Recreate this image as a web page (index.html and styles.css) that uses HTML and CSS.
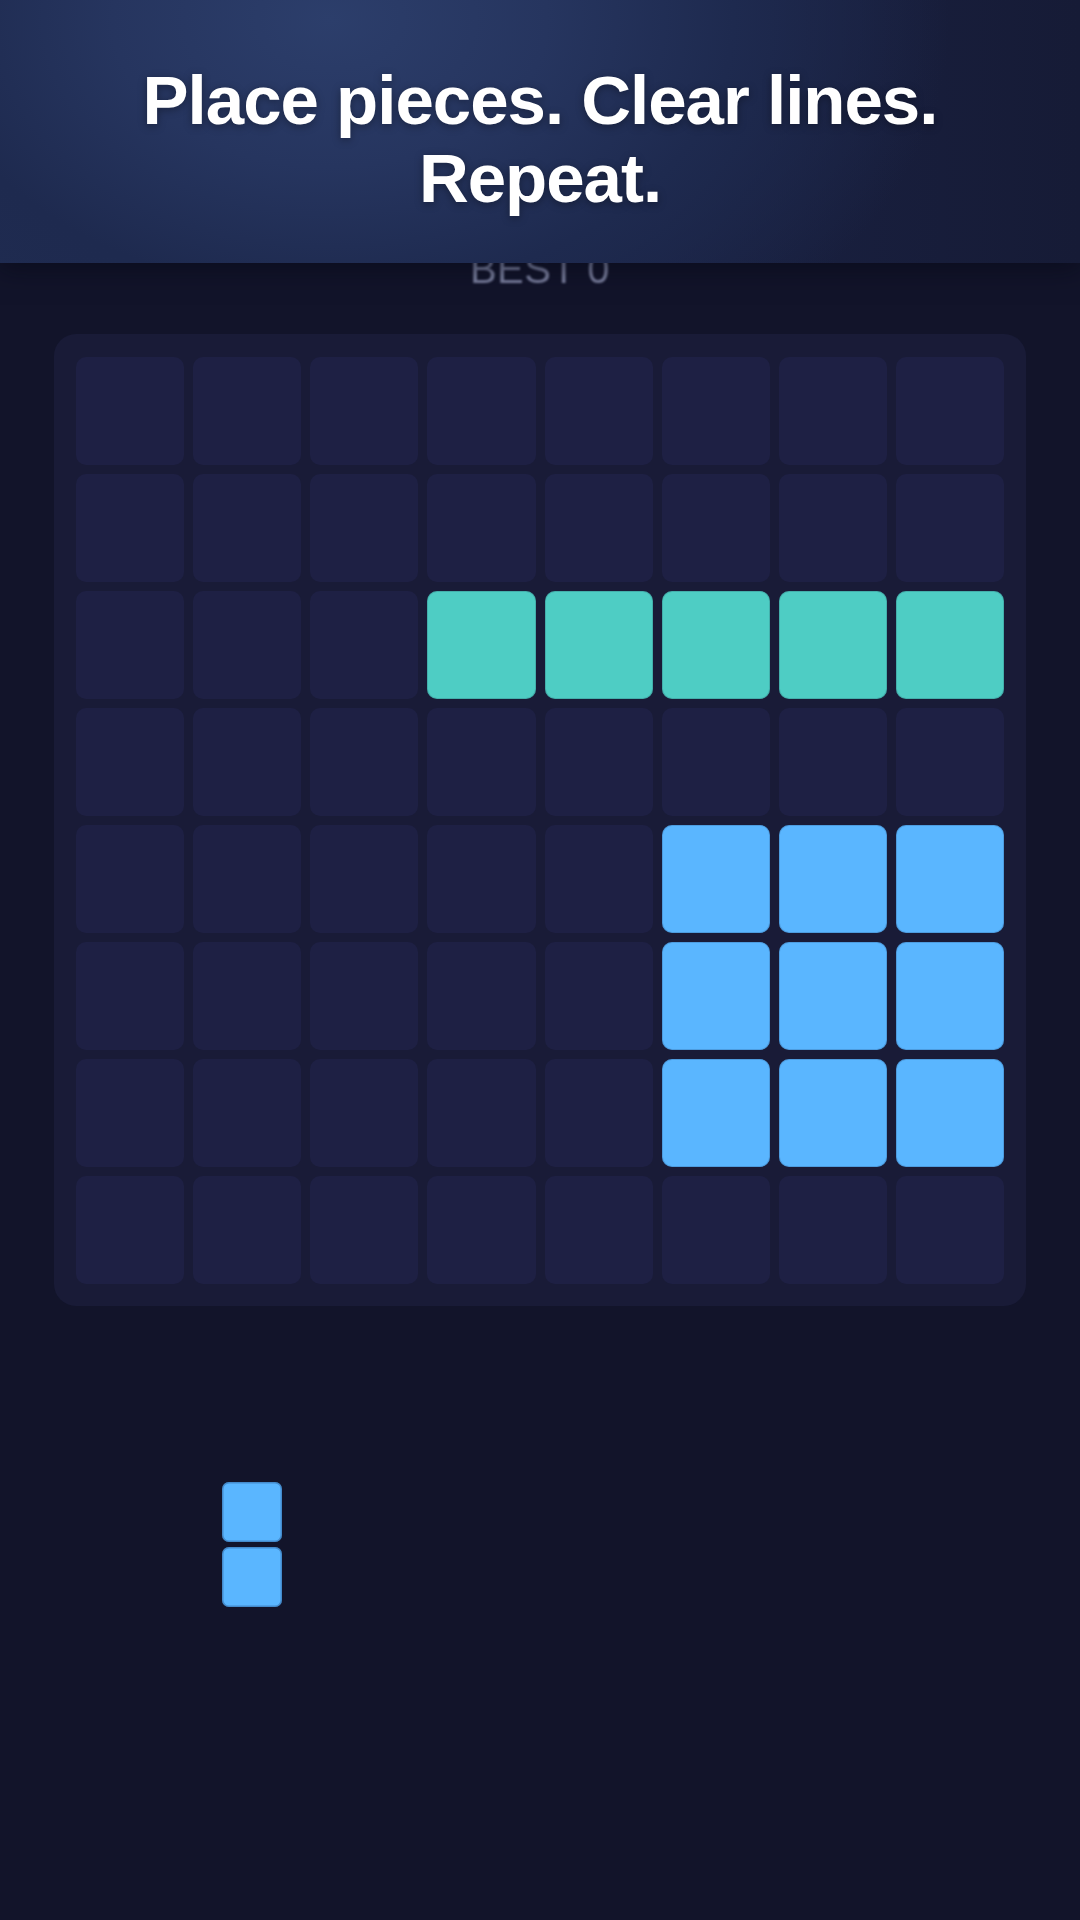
FILE: index.html
```html
<!DOCTYPE html>
<html lang="en">
<head>
<meta charset="utf-8">
<title>Block Puzzle</title>
<link rel="stylesheet" href="styles.css">
</head>
<body>
<header class="banner">
  <h1 class="banner-title">Place pieces. Clear lines.<br>Repeat.</h1>
</header>
<main class="game">
  <div class="best">BEST 0</div>
  <div class="board">
    <div class="cell"></div><div class="cell"></div><div class="cell"></div><div class="cell"></div><div class="cell"></div><div class="cell"></div><div class="cell"></div><div class="cell"></div>
    <div class="cell"></div><div class="cell"></div><div class="cell"></div><div class="cell"></div><div class="cell"></div><div class="cell"></div><div class="cell"></div><div class="cell"></div>
    <div class="cell"></div><div class="cell"></div><div class="cell"></div><div class="cell teal"></div><div class="cell teal"></div><div class="cell teal"></div><div class="cell teal"></div><div class="cell teal"></div>
    <div class="cell"></div><div class="cell"></div><div class="cell"></div><div class="cell"></div><div class="cell"></div><div class="cell"></div><div class="cell"></div><div class="cell"></div>
    <div class="cell"></div><div class="cell"></div><div class="cell"></div><div class="cell"></div><div class="cell"></div><div class="cell blue"></div><div class="cell blue"></div><div class="cell blue"></div>
    <div class="cell"></div><div class="cell"></div><div class="cell"></div><div class="cell"></div><div class="cell"></div><div class="cell blue"></div><div class="cell blue"></div><div class="cell blue"></div>
    <div class="cell"></div><div class="cell"></div><div class="cell"></div><div class="cell"></div><div class="cell"></div><div class="cell blue"></div><div class="cell blue"></div><div class="cell blue"></div>
    <div class="cell"></div><div class="cell"></div><div class="cell"></div><div class="cell"></div><div class="cell"></div><div class="cell"></div><div class="cell"></div><div class="cell"></div>
  </div>
  <div class="tray">
    <div class="piece">
      <div class="block"></div>
      <div class="block"></div>
    </div>
  </div>
</main>
</body>
</html>
```

FILE: styles.css
```css
html, body {
  margin: 0;
  padding: 0;
}
body {
  width: 1080px;
  height: 1920px;
  background: #12142a;
  font-family: "Liberation Sans", Arial, Helvetica, sans-serif;
  position: relative;
  overflow: hidden;
}
.banner {
  position: absolute;
  top: 0;
  left: 0;
  right: 0;
  height: 263px;
  box-sizing: border-box;
  padding-top: 62px;
  background:
    radial-gradient(ellipse 620px 420px at 330px 20px, #2c3e6b 0%, #26355f 35%, #1e2a4f 65%, rgba(24,29,56,0) 100%),
    linear-gradient(90deg, #202c52 0%, #1a2244 55%, #161b36 100%);
  box-shadow: 0 6px 24px rgba(6, 8, 20, 0.55);
  z-index: 2;
}
.banner-title {
  margin: 0;
  text-align: center;
  color: #ffffff;
  font-family: "Liberation Sans", Arial, Helvetica, sans-serif;
  font-weight: 700;
  font-size: 69px;
  line-height: 78px;
  letter-spacing: -1px;
  text-shadow: 0 2px 8px rgba(0, 0, 0, 0.35);
}
.game {
  padding-top: 245px;
  display: flex;
  flex-direction: column;
  align-items: center;
}
.best {
  font-size: 40px;
  line-height: 48px;
  color: #7b809f;
  letter-spacing: 0.5px;
  filter: blur(0.8px);
}
.board {
  margin-top: 41px;
  width: 972px;
  height: 972px;
  box-sizing: border-box;
  padding: 23px 22px 22px 22px;
  background: #191b37;
  border-radius: 22px;
  display: grid;
  grid-template-columns: repeat(8, 1fr);
  grid-template-rows: repeat(8, 1fr);
  gap: 9px;
}
.cell {
  background: #1e2044;
  border-radius: 10px;
}
.cell.teal {
  background: #4ecdc4;
  box-shadow: inset 0 0 0 1px rgba(20, 40, 60, 0.18);
}
.cell.blue {
  background: #5ab6ff;
  box-shadow: inset 0 0 0 1px rgba(20, 40, 80, 0.18);
}
.tray {
  align-self: stretch;
  margin-top: 176px;
  padding-left: 222px;
  display: flex;
}
.piece {
  display: flex;
  flex-direction: column;
  gap: 5px;
}
.block {
  width: 60px;
  height: 60px;
  border-radius: 7px;
  background: #5ab6ff;
  box-shadow: inset 0 0 0 1.5px rgba(30, 60, 110, 0.35);
}
```
